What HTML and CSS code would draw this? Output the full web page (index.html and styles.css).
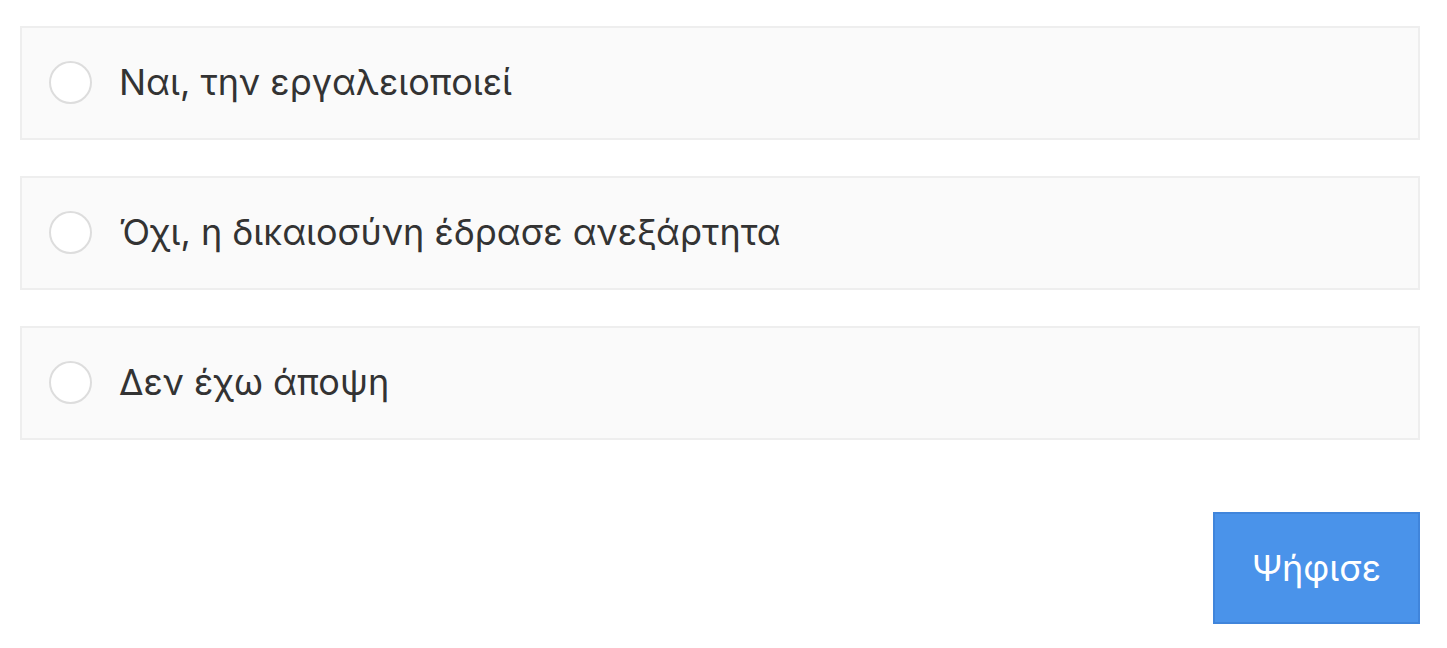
FILE: index.html
```html
<!DOCTYPE html>
<html lang="el">
<head>
    <meta charset="utf-8">
    <title>Ψηφοφορία</title>
    <link rel="stylesheet" href="styles.css">
</head>
<body>
<form class="poll">
    <label class="option">
        <input type="radio" name="vote" value="yes">
        <span>Ναι, την εργαλειοποιεί</span>
    </label>
    <label class="option">
        <input type="radio" name="vote" value="no">
        <span>Όχι, η δικαιοσύνη έδρασε ανεξάρτητα</span>
    </label>
    <label class="option">
        <input type="radio" name="vote" value="none">
        <span>Δεν έχω άποψη</span>
    </label>
    <button type="submit" class="vote-btn">Ψήφισε</button>
</form>
</body>
</html>
```

FILE: styles.css
```css
* {
    box-sizing: border-box;
}

body {
    margin: 0;
    background: #fff;
    color: #333;
    font-family: Inter, "Noto Sans", sans-serif;
    font-size: 36px;
    line-height: 44px;
}

.poll {
    display: flex;
    flex-direction: column;
    gap: 36px;
    padding: 26px 27px 24px 20px;
}

.option {
    display: flex;
    align-items: center;
    gap: 27px;
    padding: 32px 27px 34px;
    border: 2px solid #eee;
    background: #fafafa;
    cursor: pointer;
}

.option input {
    appearance: none;
    flex: none;
    width: 43px;
    height: 43px;
    margin: 0;
    border: 2px solid #ddd;
    border-radius: 50%;
    background: #fff;
}

.option input:checked {
    border: 12px solid #4a93ea;
}

.vote-btn {
    align-self: flex-end;
    margin-top: 36px;
    padding: 32px 37px;
    border: 2px solid #4085db;
    background: #4a93ea;
    color: #fff;
    font: inherit;
    cursor: pointer;
}
```
